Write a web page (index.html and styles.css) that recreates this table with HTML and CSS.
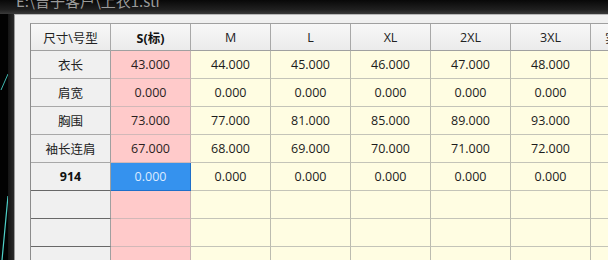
FILE: index.html
```html
<!DOCTYPE html>
<html lang="zh">
<head>
<meta charset="utf-8">
<title>尺寸表</title>
<link rel="stylesheet" href="styles.css">
</head>
<body>
<div class="window">
  <div class="titlebar"><span class="title">E:\曾子客户\上衣1.sti</span></div>
  <div class="frame">
    <div class="desk">
      <svg width="8" height="246" viewBox="0 0 8 246">
        <line x1="8" y1="60" x2="1" y2="76" stroke="#3fb8b0" stroke-width="1"/>
        <line x1="8" y1="182" x2="2" y2="246" stroke="#4fd0c8" stroke-width="1.2"/>
      </svg>
    </div>
    <div class="edge"></div>
    <div class="client">
      <div class="sheet">
        <div class="cell corner">尺寸\号型</div>
        <div class="cell colhead bold">S(标)</div>
        <div class="cell colhead">M</div>
        <div class="cell colhead">L</div>
        <div class="cell colhead">XL</div>
        <div class="cell colhead">2XL</div>
        <div class="cell colhead">3XL</div>
        <div class="cell colhead extra">实测尺寸</div>
        <div class="cell colhead"></div>

        <div class="cell rowhead">衣长</div>
        <div class="cell base">43.000</div>
        <div class="cell val">44.000</div>
        <div class="cell val">45.000</div>
        <div class="cell val">46.000</div>
        <div class="cell val">47.000</div>
        <div class="cell val">48.000</div>
        <div class="cell val"></div>
        <div class="cell val"></div>

        <div class="cell rowhead">肩宽</div>
        <div class="cell base">0.000</div>
        <div class="cell val">0.000</div>
        <div class="cell val">0.000</div>
        <div class="cell val">0.000</div>
        <div class="cell val">0.000</div>
        <div class="cell val">0.000</div>
        <div class="cell val"></div>
        <div class="cell val"></div>

        <div class="cell rowhead">胸围</div>
        <div class="cell base">73.000</div>
        <div class="cell val">77.000</div>
        <div class="cell val">81.000</div>
        <div class="cell val">85.000</div>
        <div class="cell val">89.000</div>
        <div class="cell val">93.000</div>
        <div class="cell val"></div>
        <div class="cell val"></div>

        <div class="cell rowhead">袖长连肩</div>
        <div class="cell base">67.000</div>
        <div class="cell val">68.000</div>
        <div class="cell val">69.000</div>
        <div class="cell val">70.000</div>
        <div class="cell val">71.000</div>
        <div class="cell val">72.000</div>
        <div class="cell val"></div>
        <div class="cell val"></div>

        <div class="cell rowhead bold dark">914</div>
        <div class="cell base selected">0.000</div>
        <div class="cell val">0.000</div>
        <div class="cell val">0.000</div>
        <div class="cell val">0.000</div>
        <div class="cell val">0.000</div>
        <div class="cell val">0.000</div>
        <div class="cell val"></div>
        <div class="cell val"></div>

        <div class="cell rowhead dark"></div>
        <div class="cell base"></div>
        <div class="cell val"></div>
        <div class="cell val"></div>
        <div class="cell val"></div>
        <div class="cell val"></div>
        <div class="cell val"></div>
        <div class="cell val"></div>
        <div class="cell val"></div>

        <div class="cell rowhead dark"></div>
        <div class="cell base"></div>
        <div class="cell val"></div>
        <div class="cell val"></div>
        <div class="cell val"></div>
        <div class="cell val"></div>
        <div class="cell val"></div>
        <div class="cell val"></div>
        <div class="cell val"></div>

        <div class="cell rowhead dark"></div>
        <div class="cell base"></div>
        <div class="cell val"></div>
        <div class="cell val"></div>
        <div class="cell val"></div>
        <div class="cell val"></div>
        <div class="cell val"></div>
        <div class="cell val"></div>
        <div class="cell val"></div>
      </div>
    </div>
  </div>
</div>
</body>
</html>
```

FILE: styles.css
```css
html, body {
  margin: 0;
  padding: 0;
  overflow: hidden;
  background: #000;
  width: 608px;
  height: 260px;
}

.window {
  display: flex;
  flex-direction: column;
  width: 608px;
  height: 260px;
  overflow: hidden;
}

.titlebar {
  height: 14px;
  flex: none;
  overflow: hidden;
  background: linear-gradient(#080808, #202020 70%, #3a3a3a);
  padding-left: 16px;
}

.title {
  display: block;
  margin-top: -9px;
  font: 15px/20px "Noto Sans CJK SC", "Open Sans", sans-serif;
  color: #9a9a9a;
  white-space: nowrap;
}

.frame {
  flex: 1;
  display: flex;
  min-height: 0;
}

.desk {
  width: 8px;
  flex: none;
  background: #020202;
}

.desk svg {
  display: block;
}

.edge {
  width: 6px;
  flex: none;
  background: linear-gradient(90deg, #141414, #2a2a2a);
}

.client {
  flex: 1;
  background: #f0f0f0;
  border-left: 1px solid #9a9a9a;
  border-top: 1px solid #b8b8b8;
  padding: 8px 0 0 15px;
  overflow: hidden;
}

.sheet {
  display: grid;
  grid-template-columns: repeat(9, 80px);
  grid-template-rows: 27px;
  grid-auto-rows: 28px;
  width: 720px;
  border-top: 1px solid #a0a0a0;
  border-left: 1px solid #8c8c8c;
}

.cell {
  box-sizing: border-box;
  display: flex;
  align-items: center;
  justify-content: center;
  border-right: 1px solid #b4b4b4;
  border-bottom: 1px solid #b4b4b4;
  font: 12.5px "Open Sans", "Noto Sans CJK SC", sans-serif;
  color: #1c1c1c;
  white-space: nowrap;
  overflow: hidden;
}

.corner,
.colhead {
  background: linear-gradient(#f8f8f8, #ebebeb);
  border-right-color: #a8a8a8;
  border-bottom-color: #a0a0a0;
  color: #222;
}

.extra {
  justify-content: flex-start;
  padding-left: 14px;
}

.rowhead {
  background: #f0f0f0;
  border-right-color: #a0a0a0;
  border-bottom-color: #a8a8a8;
  color: #222;
}

.rowhead.dark {
  border-bottom-color: #686868;
}

.bold {
  font-weight: 700;
  color: #111;
}

.base {
  background: #ffcaca;
  border-right-color: #c8b4b4;
  border-bottom-color: #d2b8b8;
  color: #2a1e1e;
}

.val {
  background: #fffde2;
  border-right-color: #bcbcb0;
  border-bottom-color: #c4c4b8;
}

.selected {
  background: #3592ee;
  color: #dcebff;
  border-right-color: #1f6fc8;
  border-bottom-color: #1f6fc8;
}
```
